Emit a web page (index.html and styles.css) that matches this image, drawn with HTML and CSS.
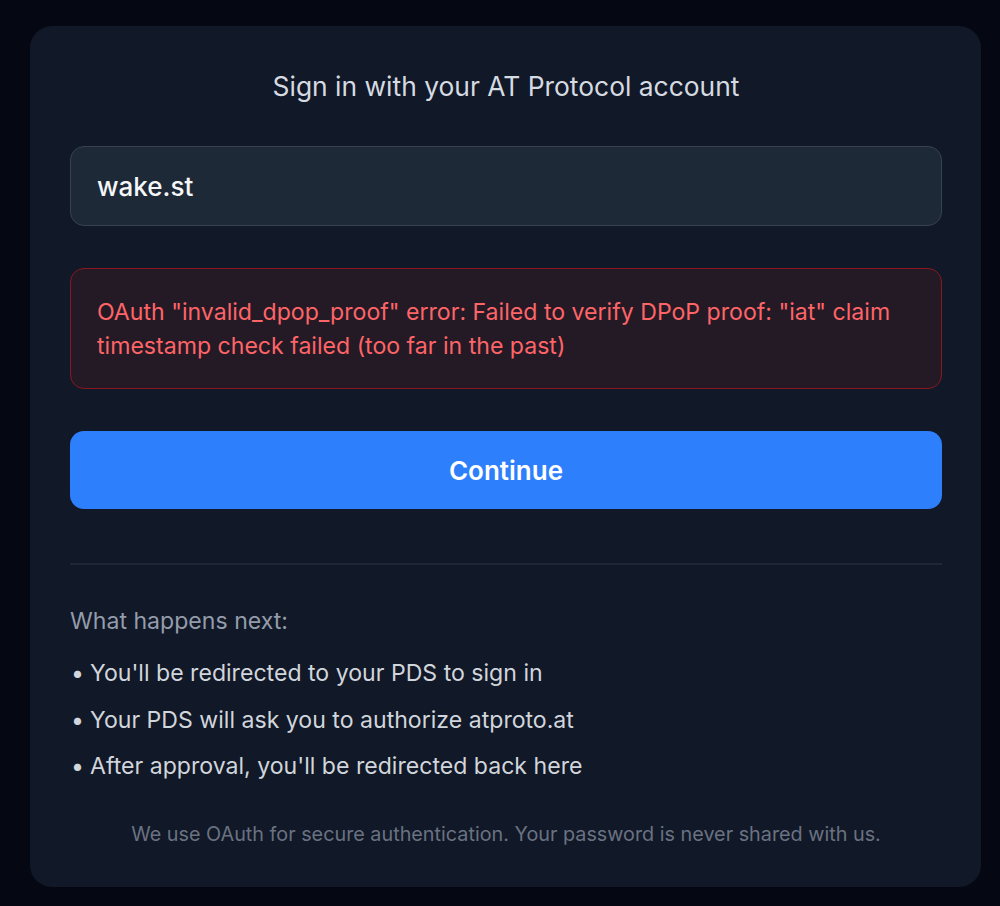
FILE: index.html
```html
<!DOCTYPE html>
<html lang="en">
<head>
    <meta charset="UTF-8">
    <meta name="viewport" content="width=device-width, initial-scale=1.0">
    <title>Sign in</title>
    <link rel="stylesheet" href="styles.css">
</head>
<body>
    <main class="card">
        <h1 class="title">Sign in with your AT Protocol account</h1>

        <form class="login-form" onsubmit="return false">
            <input class="handle-input" type="text" value="wake.st" aria-label="Handle">

            <div class="error-box">
                OAuth "invalid_dpop_proof" error: Failed to verify DPoP proof: "iat" claim timestamp check failed (too far in the past)
            </div>

            <button class="continue-btn" type="submit">Continue</button>
        </form>

        <hr class="divider">

        <section class="next-steps">
            <p class="next-title">What happens next:</p>
            <ul class="steps">
                <li>You'll be redirected to your PDS to sign in</li>
                <li>Your PDS will ask you to authorize atproto.at</li>
                <li>After approval, you'll be redirected back here</li>
            </ul>
        </section>

        <p class="note">We use OAuth for secure authentication. Your password is never shared with us.</p>
    </main>
</body>
</html>
```

FILE: styles.css
```css
* {
    box-sizing: border-box;
}
body {
    margin: 0;
    padding: 26px 19px 20px 30px;
    background-color: #050812;
    font-family: Inter, "Noto Sans", sans-serif;
}
.card {
    background-color: #111827;
    border-radius: 22px;
    padding: 42px 39px 39px 40px;
}
.title {
    margin: 0;
    font-size: 26.4px;
    line-height: 36px;
    font-weight: 400;
    text-align: center;
    color: #d6dae1;
}
.login-form {
    margin-top: 42px;
    display: flex;
    flex-direction: column;
    gap: 42px;
}
.handle-input {
    height: 80px;
    width: 100%;
    padding: 0 26px;
    background-color: #1e2937;
    border: 1px solid #364153;
    border-radius: 14px;
    color: #f5f6f8;
    font-family: inherit;
    font-size: 26px;
    font-weight: 500;
    outline: none;
}
.error-box {
    padding: 26px 26px 25px;
    background-color: #231a26;
    border: 1px solid #8a1720;
    border-radius: 14px;
    color: #ff6467;
    font-size: 23.1px;
    line-height: 34px;
}
.continue-btn {
    height: 78px;
    border: none;
    border-radius: 14px;
    background-color: #2e7ffc;
    color: #ffffff;
    font-family: inherit;
    font-size: 26px;
    font-weight: 600;
}
.divider {
    margin: 54px 0 0;
    border: none;
    border-top: 2px solid #1f2735;
}
.next-steps {
    margin-top: 41px;
}
.next-title {
    margin: 0;
    font-size: 23.1px;
    line-height: 30px;
    color: #949cab;
}
.steps {
    list-style: none;
    margin: 22px 0 0;
    padding: 0;
    display: flex;
    flex-direction: column;
    gap: 16.5px;
}
.steps li {
    display: flex;
    font-size: 23.1px;
    line-height: 30px;
    color: #d1d5dc;
}
.steps li::before {
    content: "\2022";
    flex: 0 0 19px;
    padding-left: 1px;
}
.note {
    margin: 40px 0 0;
    text-align: center;
    font-size: 19.8px;
    line-height: 27px;
    color: #6a7282;
}
```
